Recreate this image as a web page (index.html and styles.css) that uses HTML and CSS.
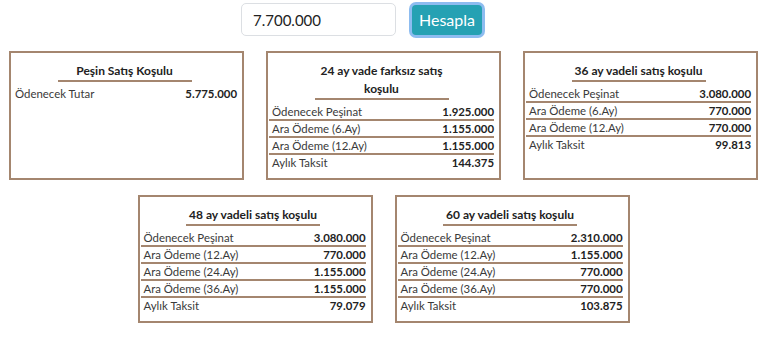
FILE: index.html
```html
<!DOCTYPE html>
<html lang="tr">
<head>
<meta charset="utf-8">
<title>Hesapla</title>
<link rel="stylesheet" href="styles.css">
</head>
<body>
<div class="page">
  <form class="calc">
    <input class="amount" type="text" value="7.700.000">
    <button class="btn" type="button">Hesapla</button>
  </form>
  <div class="cards">
    <section class="card">
      <h3 class="title">Peşin Satış Koşulu</h3>
      <div class="row"><span>Ödenecek Tutar</span><b>5.775.000</b></div>
    </section>
    <section class="card">
      <h3 class="title">24 ay vade farksız satış koşulu</h3>
      <div class="row"><span>Ödenecek Peşinat</span><b>1.925.000</b></div>
      <div class="row"><span>Ara Ödeme (6.Ay)</span><b>1.155.000</b></div>
      <div class="row"><span>Ara Ödeme (12.Ay)</span><b>1.155.000</b></div>
      <div class="row"><span>Aylık Taksit</span><b>144.375</b></div>
    </section>
    <section class="card">
      <h3 class="title">36 ay vadeli satış koşulu</h3>
      <div class="row"><span>Ödenecek Peşinat</span><b>3.080.000</b></div>
      <div class="row"><span>Ara Ödeme (6.Ay)</span><b>770.000</b></div>
      <div class="row"><span>Ara Ödeme (12.Ay)</span><b>770.000</b></div>
      <div class="row"><span>Aylık Taksit</span><b>99.813</b></div>
    </section>
    <section class="card">
      <h3 class="title">48 ay vadeli satış koşulu</h3>
      <div class="row"><span>Ödenecek Peşinat</span><b>3.080.000</b></div>
      <div class="row"><span>Ara Ödeme (12.Ay)</span><b>770.000</b></div>
      <div class="row"><span>Ara Ödeme (24.Ay)</span><b>1.155.000</b></div>
      <div class="row"><span>Ara Ödeme (36.Ay)</span><b>1.155.000</b></div>
      <div class="row"><span>Aylık Taksit</span><b>79.079</b></div>
    </section>
    <section class="card">
      <h3 class="title">60 ay vadeli satış koşulu</h3>
      <div class="row"><span>Ödenecek Peşinat</span><b>2.310.000</b></div>
      <div class="row"><span>Ara Ödeme (12.Ay)</span><b>1.155.000</b></div>
      <div class="row"><span>Ara Ödeme (24.Ay)</span><b>770.000</b></div>
      <div class="row"><span>Ara Ödeme (36.Ay)</span><b>770.000</b></div>
      <div class="row"><span>Aylık Taksit</span><b>103.875</b></div>
    </section>
  </div>
</div>
</body>
</html>
```
FILE: styles.css
```css
* { box-sizing: border-box; }
html, body { margin: 0; background: #fff; }
body {
  font-family: Lato, "Open Sans", sans-serif;
  color: #2a2a2a;
}
.page { width: 767px; }
.calc {
  display: flex;
  justify-content: center;
  align-items: center;
  gap: 16px;
  margin: 3px 0 0;
  padding-right: 44px;
}
.amount {
  width: 155px;
  height: 33px;
  border: 1px solid #dcdfe3;
  border-radius: 5px;
  padding: 0 11px;
  font: 15px Lato, "Open Sans", sans-serif;
  color: #222;
  background: #fff;
}
.btn {
  width: 70px;
  height: 30px;
  border: 0;
  border-radius: 4px;
  background: #25a1b3;
  color: #fff;
  font: 16px Lato, "Open Sans", sans-serif;
  box-shadow: 0 0 0 3px #8dbcf0;
  padding: 0;
}
.cards {
  display: flex;
  flex-wrap: wrap;
  justify-content: center;
  column-gap: 22px;
  row-gap: 15px;
  margin-top: 15px;
}
.card {
  width: 235px;
  border: 2px solid #a4866f;
  padding: 9px 5px 8px 1px;
}
.title {
  width: 134px;
  margin: 0 auto 4px;
  font-size: 12px;
  font-weight: 700;
  line-height: 18px;
  text-align: center;
  border-bottom: 2px solid #a4866f;
  color: #222;
}
.row {
  display: flex;
  justify-content: space-between;
  padding-left: 3px;
  font-size: 11.4px;
  line-height: 15px;
  border-bottom: 2px solid #a4866f;
}
.row:last-child { border-bottom: 0; }
.row span { color: #3a3a3a; }
.row b { font-weight: 700; color: #222; }
```
